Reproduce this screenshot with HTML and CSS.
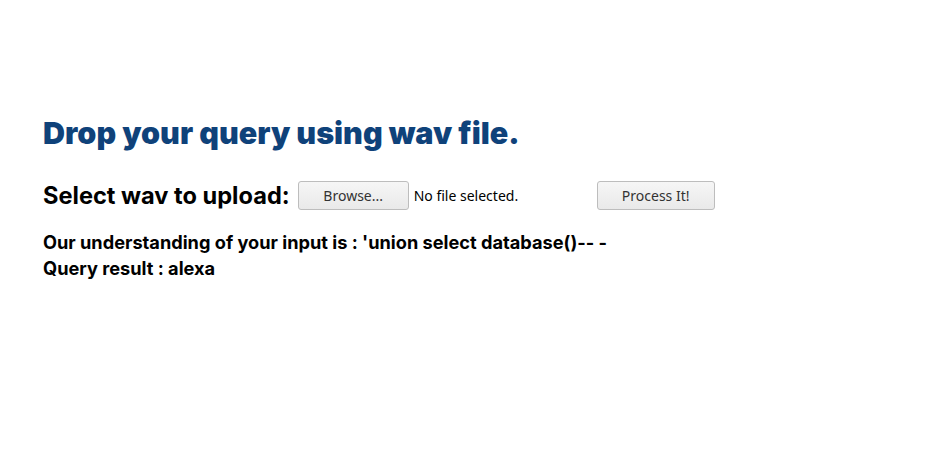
FILE: index.html
```html
<!DOCTYPE html>
<html>
<head>
<meta charset="utf-8">
<link rel="stylesheet" href="styles.css">
</head>
<body>
<main class="page">
  <h1 class="title">Drop your query using wav file.</h1>
  <form class="upload">
    <span class="label">Select wav to upload:</span>
    <span class="file">
      <button type="button" class="btn btn-browse">Browse...</button>
      <span class="file-name">No file selected.</span>
    </span>
    <button type="button" class="btn btn-submit">Process It!</button>
  </form>
  <div class="result">
    <p class="line">Our understanding of your input is : 'union select database()-- -</p>
    <p class="line">Query result : alexa</p>
  </div>
</main>
</body>
</html>
```

FILE: styles.css
```css
html, body {
  margin: 0;
  padding: 0;
  background: #fff;
}
.page {
  padding: 113px 43px 0;
  font-family: Inter, "Liberation Sans", sans-serif;
  color: #000;
}
.title {
  margin: 0;
  font-size: 30.5px;
  font-weight: 900;
  color: #0f427a;
  line-height: 40px;
}
.upload {
  display: flex;
  align-items: center;
  margin-top: 27px;
  height: 30px;
}
.label {
  font-size: 23.6px;
  font-weight: 700;
}
.file {
  display: flex;
  align-items: center;
  margin-left: 8px;
}
.btn {
  font-family: "Noto Sans", sans-serif;
  font-size: 14px;
  color: #333;
  background: linear-gradient(#f6f6f6, #e9e9e9);
  border: 1px solid #bdbdbd;
  border-radius: 3px;
  height: 29px;
  padding: 0;
}
.btn-browse {
  width: 111px;
}
.file-name {
  font-family: "Noto Sans", sans-serif;
  font-size: 14px;
  margin-left: 5px;
  width: 183px;
}
.btn-submit {
  width: 118px;
}
.result {
  margin-top: 19px;
}
.line {
  margin: 0;
  font-size: 18.2px;
  font-weight: 700;
  line-height: 26px;
}
```
